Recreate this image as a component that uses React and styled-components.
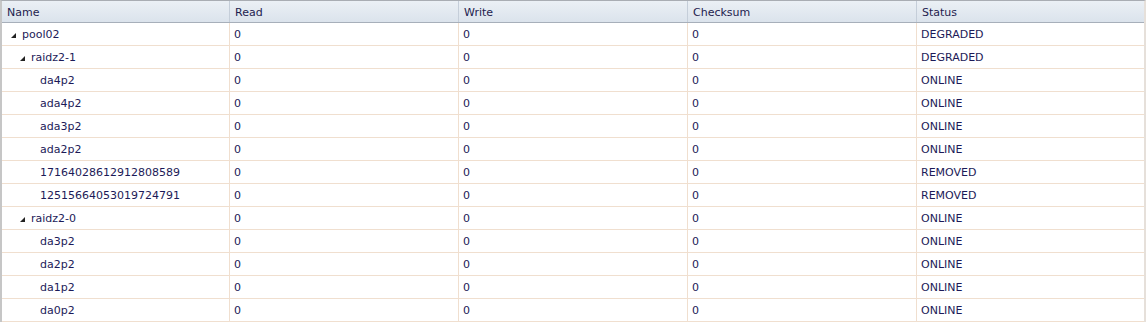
import React from 'react';
import styled, { createGlobalStyle } from 'styled-components';

const rows = [
  { name: 'pool02', level: 0, group: true, read: 0, write: 0, checksum: 0, status: 'DEGRADED' },
  { name: 'raidz2-1', level: 1, group: true, read: 0, write: 0, checksum: 0, status: 'DEGRADED' },
  { name: 'da4p2', level: 2, read: 0, write: 0, checksum: 0, status: 'ONLINE' },
  { name: 'ada4p2', level: 2, read: 0, write: 0, checksum: 0, status: 'ONLINE' },
  { name: 'ada3p2', level: 2, read: 0, write: 0, checksum: 0, status: 'ONLINE' },
  { name: 'ada2p2', level: 2, read: 0, write: 0, checksum: 0, status: 'ONLINE' },
  { name: '17164028612912808589', level: 2, read: 0, write: 0, checksum: 0, status: 'REMOVED' },
  { name: '12515664053019724791', level: 2, read: 0, write: 0, checksum: 0, status: 'REMOVED' },
  { name: 'raidz2-0', level: 1, group: true, read: 0, write: 0, checksum: 0, status: 'ONLINE' },
  { name: 'da3p2', level: 2, read: 0, write: 0, checksum: 0, status: 'ONLINE' },
  { name: 'da2p2', level: 2, read: 0, write: 0, checksum: 0, status: 'ONLINE' },
  { name: 'da1p2', level: 2, read: 0, write: 0, checksum: 0, status: 'ONLINE' },
  { name: 'da0p2', level: 2, read: 0, write: 0, checksum: 0, status: 'ONLINE' },
];

const columns = ['Name', 'Read', 'Write', 'Checksum', 'Status'];

function Expander() {
  return (
    <Styled.Expander width="5" height="5" viewBox="0 0 5 5">
      <polygon points="5,0 5,5 0,5" fill="#222" />
    </Styled.Expander>
  );
}

function App() {
  return (
    <>
      <GlobalStyle />
      <Styled.Grid>
        <Styled.HeaderRow>
          {columns.map((c) => (
            <Styled.HeaderCell key={c}>{c}</Styled.HeaderCell>
          ))}
        </Styled.HeaderRow>
        {rows.map((r) => (
          <Styled.Row key={r.name}>
            <Styled.NameCell $level={r.level}>
              {r.group && <Expander />}
              {r.name}
            </Styled.NameCell>
            <Styled.Cell>{r.read}</Styled.Cell>
            <Styled.Cell>{r.write}</Styled.Cell>
            <Styled.Cell>{r.checksum}</Styled.Cell>
            <Styled.Cell>{r.status}</Styled.Cell>
          </Styled.Row>
        ))}
      </Styled.Grid>
    </>
  );
}

const GlobalStyle = createGlobalStyle`
  html, body {
    margin: 0;
    padding: 0;
    background: #fff;
  }
  body {
    font-family: "DejaVu Sans", Verdana, sans-serif;
    font-size: 11px;
    color: #1c1a58;
  }
`;

const cols = '228px 229px 229px 229px 227px';

const Styled = {
  Grid: styled.div`
    width: 1146px;
    height: 322px;
    box-sizing: border-box;
    border-left: 2px solid #c6c6c6;
    border-right: 2px solid #e6e0da;
    border-top: 1px solid #a9adb3;
    overflow: hidden;
    background: #fff;
  `,
  HeaderRow: styled.div`
    display: grid;
    grid-template-columns: ${cols};
    height: 22px;
    box-sizing: border-box;
    border-bottom: 1px solid #a7afba;
    background: linear-gradient(#ebf0f5, #dbe3ec);
  `,
  HeaderCell: styled.div`
    display: flex;
    align-items: center;
    padding: 1px 0 0 5px;
    box-sizing: border-box;
    border-right: 1px solid #c5ced9;
    color: #1e1c4e;
    &:last-child {
      border-right: none;
    }
  `,
  Row: styled.div`
    display: grid;
    grid-template-columns: ${cols};
    height: 23px;
    box-sizing: border-box;
    border-bottom: 1px solid #f0dfcf;
  `,
  Cell: styled.div`
    display: flex;
    align-items: center;
    padding-left: 4px;
    box-sizing: border-box;
    border-right: 1px solid #f0dfcf;
    white-space: nowrap;
    &:last-child {
      border-right: none;
    }
  `,
  NameCell: styled.div`
    display: flex;
    align-items: center;
    box-sizing: border-box;
    border-right: 1px solid #f0dfcf;
    white-space: nowrap;
    padding-left: ${(p) => (p.$level === 2 ? 38 : 9 + p.$level * 9)}px;
  `,
  Expander: styled.svg`
    flex: none;
    margin-right: 6px;
    margin-top: 2px;
  `,
};

export default App;
